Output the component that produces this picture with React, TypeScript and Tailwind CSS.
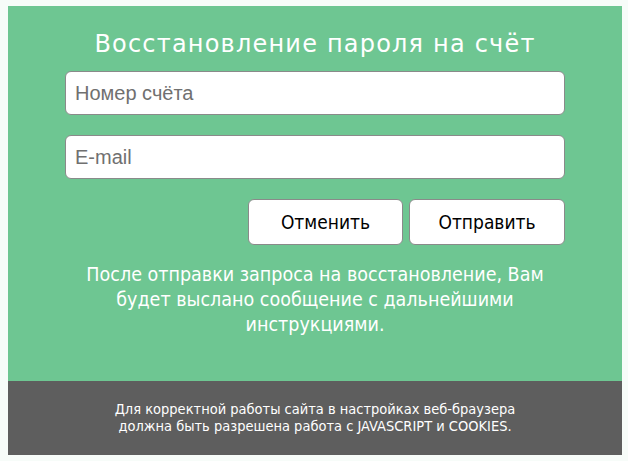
import React from "react";

export default function App() {
  return (
    <div className="min-h-[461px] w-full bg-[#f7fcf9] pt-[6px] pl-[8px]">
      <div className="w-[614px]">
        <div className="h-[375px] bg-[#6ec692] flex flex-col items-center">
          <h1 className="mt-[21px] h-[34px] text-[24px] leading-[34px] tracking-[1.2px] text-white font-normal font-['DejaVu_Sans',sans-serif]">
            Восстановление пароля на счёт
          </h1>
          <div className="mt-[10px] w-[500px] flex flex-col gap-[20px]">
            <input
              placeholder="Номер счёта"
              className="h-[44px] w-full rounded-[6px] border border-[#8a8a8a] bg-white px-[9px] text-[20px] text-[#333] placeholder:text-[#707070] outline-none font-['Liberation_Sans',Arial,sans-serif]"
            />
            <input
              placeholder="E-mail"
              className="h-[44px] w-full rounded-[6px] border border-[#8a8a8a] bg-white px-[9px] text-[20px] text-[#333] placeholder:text-[#707070] outline-none font-['Liberation_Sans',Arial,sans-serif]"
            />
            <div className="flex justify-end gap-[6px]">
              <button className="h-[46px] w-[155px] rounded-[6px] border border-[#8a8a8a] bg-white text-[19px] text-black font-['DejaVu_Sans_Condensed',sans-serif]">
                Отменить
              </button>
              <button className="h-[46px] w-[156px] rounded-[6px] border border-[#8a8a8a] bg-white text-[19px] text-black font-['DejaVu_Sans_Condensed',sans-serif]">
                Отправить
              </button>
            </div>
          </div>
          <p className="mt-[17px] w-[480px] text-center text-[19.5px] leading-[25px] text-white font-['DejaVu_Sans_Condensed',sans-serif]">
            После отправки запроса на восстановление, Вам будет выслано сообщение с дальнейшими инструкциями.
          </p>
        </div>
        <div className="h-[74px] bg-[#5e5e5e] flex items-center justify-center">
          <p className="text-center text-[14.5px] leading-[17px] text-white font-['DejaVu_Sans_Condensed',sans-serif]">
            Для корректной работы сайта в настройках веб-браузера
            <br />
            должна быть разрешена работа с JAVASCRIPT и COOKIES.
          </p>
        </div>
      </div>
    </div>
  );
}
